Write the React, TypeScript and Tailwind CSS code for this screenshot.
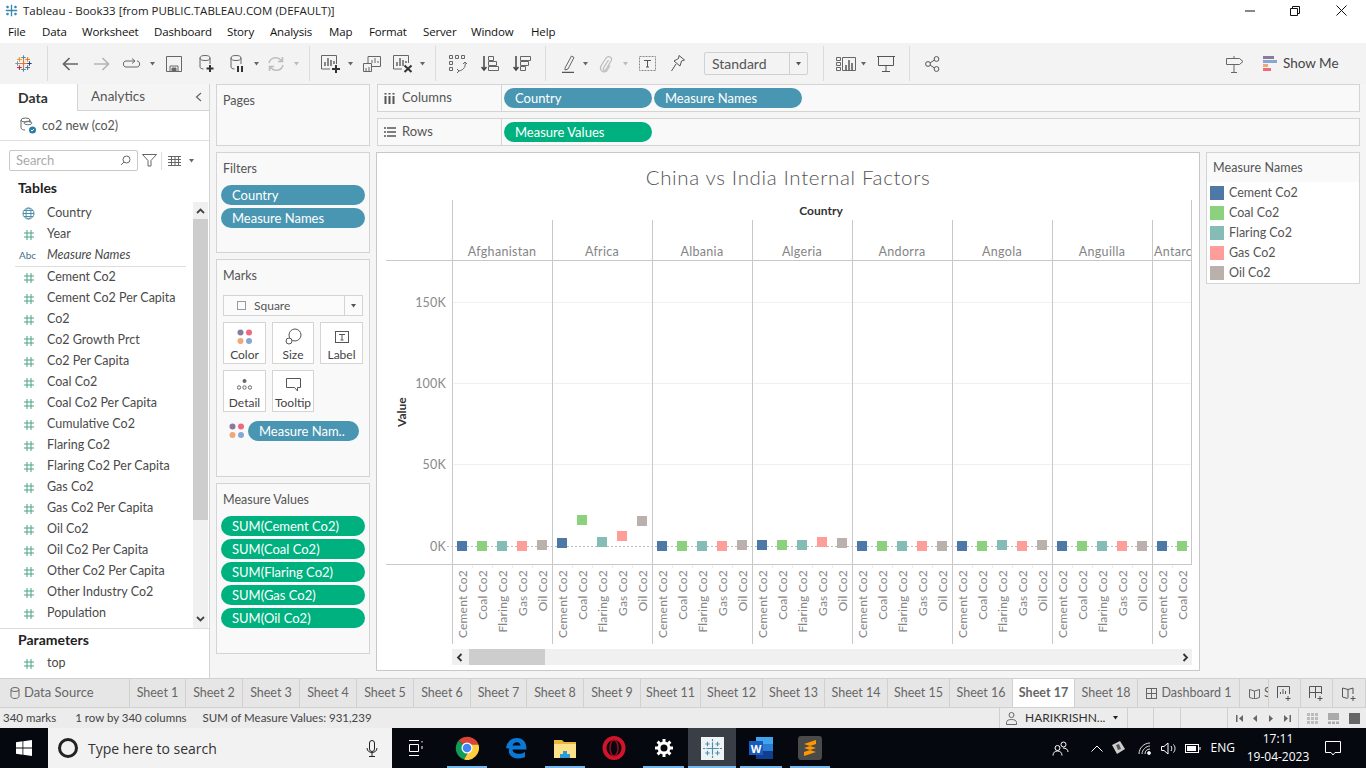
import React from "react";

const T = "font-['Lato','Liberation_Sans',sans-serif]";
const S = "font-['Open_Sans','Liberation_Sans',sans-serif]";

function Caret({ c = "", color = "#666" }: { c?: string; color?: string }) {
  return (
    <svg className={`${c} shrink-0`} width="5" height="4" viewBox="0 0 5 4">
      <path d="M0 0h5L2.5 3.5z" fill={color} />
    </svg>
  );
}
function Sep({ c }: { c: string }) {
  return <div className={`${c} w-px h-[35px] bg-[#dcdcdc] shrink-0`} />;
}
function Logo({ size = 17 }: { size?: number }) {
  const bars: [number, number, number, string, number][] = [
    [8.5, 8.5, 4, "#e8762b", 1.2],
    [8.5, 2.5, 2.2, "#5b879b", 1],
    [8.5, 14.5, 2.2, "#59879b", 1],
    [2.5, 8.5, 2.2, "#7099a6", 1],
    [14.5, 8.5, 2.2, "#1f457e", 1],
    [4.4, 4.4, 2.4, "#eb912b", 1],
    [12.6, 4.4, 2.4, "#e8762b", 1],
    [4.4, 12.6, 2.4, "#c72035", 1],
    [12.6, 12.6, 2.4, "#5b6591", 1],
  ];
  return (
    <svg className="shrink-0" width={size} height={size} viewBox="0 0 17 17">
      {bars.map(([x, y, r, col, w], i) => (
        <path key={i} d={`M${x - r} ${y}h${r * 2}M${x} ${y - r}v${r * 2}`} stroke={col} strokeWidth={w} fill="none" />
      ))}
    </svg>
  );
}
function Pill({ label, green, c = "w-[144px]" }: { label: string; green?: boolean; c?: string }) {
  return (
    <div className={`${c} ${green ? "bg-[#00b180]" : "bg-[#4996b2]"} h-5 rounded-[10px] flex items-center pl-[11px] text-white text-[13px] leading-none shrink-0 whitespace-nowrap`}>
      {label}
    </div>
  );
}
function Hash() {
  return (
    <svg width="10" height="10" viewBox="0 0 10 10" className="shrink-0">
      <path d="M3 0v10M7 0v10M0 3h10M0 7h10" stroke="#4ba383" strokeWidth="1" fill="none" />
    </svg>
  );
}
function Dots() {
  return (
    <svg width="16" height="16" viewBox="0 0 16 16" className="shrink-0">
      <circle cx="3.5" cy="3.5" r="3" fill="#8a7a9c" />
      <circle cx="12" cy="3.5" r="3" fill="#f0687c" />
      <circle cx="3.5" cy="12" r="3" fill="#f0a878" />
      <circle cx="12" cy="12" r="3" fill="#86a8d0" />
    </svg>
  );
}

const fields = ["Cement Co2", "Cement Co2 Per Capita", "Co2", "Co2 Growth Prct", "Co2 Per Capita", "Coal Co2", "Coal Co2 Per Capita", "Cumulative Co2", "Flaring Co2", "Flaring Co2 Per Capita", "Gas Co2", "Gas Co2 Per Capita", "Oil Co2", "Oil Co2 Per Capita", "Other Co2 Per Capita", "Other Industry Co2", "Population"];

function Row({ icon, label, italic }: { icon: React.ReactNode; label: string; italic?: boolean }) {
  return (
    <div className="h-[21px] flex items-center">
      <div className="w-[47px] pl-[15px] flex justify-center items-center pr-[5px]">{icon}</div>
      <span className={`text-[12.5px] text-[#4a4a4a] whitespace-nowrap ${italic ? "italic" : ""}`}>{label}</span>
    </div>
  );
}

function LeftPanel() {
  return (
    <div className="w-[210px] shrink-0 bg-white border-r border-[#d4d4d4] flex flex-col h-full">
      <div className="h-[27px] flex text-[14px] shrink-0">
        <div className="w-[77px] flex items-center pl-[18px] pb-[1px] font-bold text-[#333]">Data</div>
        <div className="flex-1 flex items-center pl-[13px] pb-[1px] bg-[#f5f5f5] border-l border-b border-[#d4d4d4] text-[13.5px] text-[#555] relative">
          Analytics
          <svg className="ml-auto mr-[7px]" width="7" height="10" viewBox="0 0 7 10"><path d="M6 1L1.500 5 6 9" stroke="#666" fill="none" strokeWidth="1.200" /></svg>
        </div>
      </div>
      <div className="h-[30px] flex items-center border-b border-[#e0e0e0] shrink-0">
        <svg className="ml-[20px]" width="16" height="17" viewBox="0 0 16 17" fill="none">
          <ellipse cx="5.500" cy="3" rx="4.500" ry="2" stroke="#666" />
          <path d="M1 3v8c0 1 2 2 4 2M10 3v3" stroke="#666" />
          <ellipse cx="8" cy="6" rx="4" ry="1.800" stroke="#777" />
          <circle cx="12.500" cy="13" r="3.500" fill="#2d7ea4" />
          <path d="M11 13l1 1 2-2" stroke="#fff" />
        </svg>
        <span className="ml-[6px] pt-[2px] text-[12.5px] text-[#555]">co2 new (co2)</span>
      </div>
      <div className="h-[21px] mt-[9px] flex items-center shrink-0">
        <div className="ml-[9px] w-[129px] h-[21px] border border-[#c8c8c8] rounded-[2px] flex items-center pl-[6px] text-[13px] text-[#aaa]">
          Search
          <svg className="ml-auto mr-[6px]" width="11" height="11" viewBox="0 0 11 11" fill="none"><circle cx="6.500" cy="4.500" r="3.500" stroke="#666" /><path d="M4 7L1 10" stroke="#666" /></svg>
        </div>
        <svg className="ml-[4px]" width="15" height="13" viewBox="0 0 15 13" fill="none"><path d="M.5.500h14L9 6.500V12H6V6.500z" stroke="#666" /></svg>
        <div className="ml-[4px] w-px h-[18px] bg-[#ddd]" />
        <svg className="ml-[6px]" width="13" height="10" viewBox="0 0 13 10" fill="none"><path d="M0 .500h13M0 3.500h13M0 6.500h13M0 9.500h13M3.500 0v10M7 0v10M10.500 0v10" stroke="#666" /></svg>
        <Caret c="ml-[8px]" />
      </div>
      <div className="h-[31px] pl-[18px] pt-[8px] text-[14px] font-bold text-[#222] leading-[18px] shrink-0">Tables</div>
      <div className="h-[426px] flex shrink-0 overflow-hidden">
        <div className="w-[193px] shrink-0 pt-[1px]">
          <Row label="Country" icon={
            <svg width="13" height="13" viewBox="0 0 13 13" fill="none" stroke="#4a8eaa"><circle cx="6.500" cy="6.500" r="5.500" /><ellipse cx="6.500" cy="6.500" rx="2.500" ry="5.500" /><path d="M1 6.500h11M2 3.500h9M2 9.500h9" /></svg>
          } />
          <Row label="Year" icon={<Hash />} />
          <Row label="Measure Names" italic icon={<span className="text-[10px] text-[#3f6f8e] -ml-[2px]">Abc</span>} />
          <div className="h-px bg-[#ddd] ml-[15px] mr-[7px]" />
          {fields.map((f) => <Row key={f} label={f} icon={<Hash />} />)}
        </div>
        <div className="w-[15px] flex flex-col bg-[#f0f0f0] shrink-0">
          <div className="h-[17px] flex items-center justify-center">
            <svg width="9" height="6" viewBox="0 0 9 6"><path d="M1 5l3.500-3.500L8 5" stroke="#444" strokeWidth="1.800" fill="none" /></svg>
          </div>
          <div className="h-[301px] bg-[#cdcdcd]" />
          <div className="flex-1 flex items-end justify-center pb-[6px]">
            <svg width="9" height="6" viewBox="0 0 9 6"><path d="M1 1l3.500 3.500L8 1" stroke="#444" strokeWidth="1.800" fill="none" /></svg>
          </div>
        </div>
      </div>
      <div className="border-t border-[#dcdcdc] pl-[18px] h-[22px] text-[14px] font-bold text-[#222] flex items-center shrink-0">Parameters</div>
      <div className="mt-[3px]"><Row label="top" icon={<Hash />} /></div>
    </div>
  );
}

function Card({ title, c, children }: { title: string; c: string; children?: React.ReactNode }) {
  return (
    <div className={`${c} bg-[#f9f9f9] border border-[#d4d4d4] shrink-0 px-[4px]`}>
      <div className="h-[30px] flex items-center pl-[2px] pt-[3px] text-[12.5px] text-[#555]">{title}</div>
      {children}
    </div>
  );
}
function MarkBtn({ label, icon, c = "w-[43px]" }: { label: string; icon: React.ReactNode; c?: string }) {
  return (
    <div className={`${c} h-[42px] border border-[#d4d4d4] bg-white flex flex-col items-center pt-[5px] shrink-0`}>
      <div className="h-[17px] flex items-center">{icon}</div>
      <span className="text-[12px] text-[#444] leading-[16px] mt-[2px]">{label}</span>
    </div>
  );
}
function ShelfColumn() {
  return (
    <div className="w-[166px] shrink-0 flex flex-col gap-[6px] pl-[6px]">
      <Card title="Pages" c="w-[154px] h-[62px]" />
      <Card title="Filters" c="w-[154px] h-[101px]">
        <div className="flex flex-col gap-[3px] mt-[2px]">
          <Pill label="Country" />
          <Pill label="Measure Names" />
        </div>
      </Card>
      <Card title="Marks" c="w-[154px] h-[218px]">
        <div className="ml-[2px] mt-[5px] w-[140px] h-[21px] border border-[#d4d4d4] bg-[#fbfbfb] flex items-center text-[12px] text-[#555]">
          <div className="w-[9px] h-[9px] border border-[#999] ml-[13px] mr-[8px]" />
          Square
          <div className="ml-auto w-[18px] h-full border-l border-[#d4d4d4] flex items-center justify-center"><Caret color="#555" /></div>
        </div>
        <div className="ml-[2px] mt-[6px] flex gap-[6px]">
          <MarkBtn label="Color" icon={<Dots />} />
          <MarkBtn label="Size" c="w-[42px]" icon={
            <svg width="17" height="17" viewBox="0 0 17 17" fill="none" stroke="#555"><circle cx="10" cy="7" r="6" /><circle cx="4" cy="13" r="3" fill="#fff" /></svg>
          } />
          <MarkBtn label="Label" icon={
            <svg width="14" height="12" viewBox="0 0 14 12" fill="none"><rect x=".5" y=".5" width="13" height="11" stroke="#555" /><path d="M4 3.500h6M7 3.500v5.500M5.500 9h3" stroke="#555" /></svg>
          } />
        </div>
        <div className="ml-[2px] mt-[6px] flex gap-[6px]">
          <MarkBtn label="Detail" icon={
            <svg width="15" height="11" viewBox="0 0 15 11" fill="none"><circle cx="7.500" cy="2" r="2" fill="#666" /><circle cx="2" cy="8.500" r="1.700" stroke="#666" /><circle cx="7.500" cy="8.500" r="1.700" stroke="#666" /><circle cx="13" cy="8.500" r="1.700" stroke="#666" /></svg>
          } />
          <MarkBtn label="Tooltip" c="w-[42px]" icon={
            <svg width="15" height="14" viewBox="0 0 15 14" fill="none"><path d="M.5.500h14v9h-3v3.500l-3-3.500H.5z" stroke="#555" /></svg>
          } />
        </div>
        <div className="flex items-center mt-[9px] ml-[8px] gap-[3px]">
          <div className="w-[16px]"><Dots /></div>
          <Pill label="Measure Nam.." c="w-[111px]" />
        </div>
      </Card>
      <Card title="Measure Values" c="w-[154px] h-[171px]">
        <div className="flex flex-col gap-[3px] mt-[2px]">
          {["SUM(Cement Co2)", "SUM(Coal Co2)", "SUM(Flaring Co2)", "SUM(Gas Co2)", "SUM(Oil Co2)"].map((p) => <Pill key={p} label={p} green />)}
        </div>
      </Card>
    </div>
  );
}

const colors = ["#4e79a7", "#8cd17d", "#86bcb6", "#ff9d9a", "#bab0ac"];
const measures = ["Cement Co2", "Coal Co2", "Flaring Co2", "Gas Co2", "Oil Co2"];
const panes = [
  { n: "Afghanistan", y: [546, 546, 546, 546, 545] },
  { n: "Africa", y: [543, 520, 542, 536, 521] },
  { n: "Albania", y: [546, 546, 546, 546, 545] },
  { n: "Algeria", y: [545, 545, 545, 542, 543] },
  { n: "Andorra", y: [546, 546, 546, 546, 546] },
  { n: "Angola", y: [546, 546, 545, 546, 545] },
  { n: "Anguilla", y: [546, 546, 546, 546, 546] },
  { n: "Antarctica", y: [546, 546, 546, 546, 546] },
];
const FF = "Lato, 'Liberation Sans', sans-serif";

function Chart() {
  return (
    <svg width="822" height="492" viewBox="377 153 822 492" className="block shrink-0" fontFamily={FF}>
      <defs>
        <clipPath id="plot"><rect x="377" y="153" width="814" height="492" /></clipPath>
      </defs>
      <text x="788" y="185" textAnchor="middle" fontSize="20.500" fontWeight="300" letterSpacing=".65" fill="#555">China vs India Internal Factors</text>
      <text x="821" y="215" textAnchor="middle" fontSize="12" fontWeight="700" fill="#333">Country</text>
      {[302, 383, 464].map((y) => <path key={y} d={`M452 ${y}.5H1191`} stroke="#f0f0f0" />)}
      {[["150K", 307], ["100K", 388], ["50K", 469], ["0K", 551]].map(([t, y]) => (
        <text key={t} x="446" y={y} textAnchor="end" fontSize="12.500" letterSpacing=".2" fill="#8a8a8a">{t}</text>
      ))}
      <text transform="translate(406 427) rotate(-90)" fontSize="12" fontWeight="700" fill="#333">Value</text>
      <path d="M447 546.500H1191" stroke="#bbb" strokeDasharray="2 2" />
      <path d="M386 260.500H1191M386 564.500H1191" stroke="#c8c8c8" />
      <path d="M452.500 200V644M1191.500 200V565" stroke="#c8c8c8" />
      {[552, 652, 752, 852, 952, 1052, 1152].map((x) => <path key={x} d={`M${x}.5 220V644`} stroke="#c8c8c8" />)}
      <g clipPath="url(#plot)">
        {panes.map((p, i) => (
          <g key={p.n}>
            <text x={i === 7 ? 1154 : 502 + i * 100} y="256" textAnchor={i === 7 ? "start" : "middle"} fontSize="12.500" letterSpacing=".3" fill="#858585">{p.n}</text>
            {p.y.map((y, k) => {
              const x = 462 + i * 100 + k * 20;
              return (
                <g key={k}>
                  <rect x={x - 5} y={y - 5} width="10" height="10" fill={colors[k]} />
                  {k > 0 && <path d={`M${x - 10}.5 565v3`} stroke="#eee" />}
                  <text transform={`translate(${x + 4.5} 570) rotate(-90)`} textAnchor="end" fontSize="12" letterSpacing=".2" fill="#858585">{measures[k]}</text>
                </g>
              );
            })}
          </g>
        ))}
      </g>
    </svg>
  );
}

function Main() {
  return (
    <div className="flex-1 min-w-0 flex flex-col pt-0 pr-[6px]">
      <div className="h-[28px] bg-[#f9f9f9] border border-[#d4d4d4] flex items-center mt-[0px] ml-[1px] shrink-0">
        <div className="w-[124px] h-full flex items-center border-r border-[#d4d4d4] text-[13px] text-[#555] pl-[6px]">
          <svg width="11" height="11" viewBox="0 0 11 11" className="mr-[7px]"><path d="M1.500 0v1.500M1.500 3v8M5.500 0v1.500M5.500 3v8M9.500 0v1.500M9.500 3v8" stroke="#555" strokeWidth="2" fill="none" /></svg>
          Columns
        </div>
        <div className="flex gap-[2px] ml-[2px]">
          <Pill label="Country" c="w-[148px]" />
          <Pill label="Measure Names" c="w-[148px]" />
        </div>
      </div>
      <div className="h-[28px] mt-[6px] bg-[#f9f9f9] border border-[#d4d4d4] flex items-center ml-[1px] shrink-0">
        <div className="w-[124px] h-full flex items-center border-r border-[#d4d4d4] text-[13px] text-[#555] pl-[6px]">
          <svg width="12" height="10" viewBox="0 0 12 10" className="mr-[6px]"><path d="M0 1h2M3 1h9M0 5h2M3 5h9M0 9h2M3 9h9" stroke="#555" strokeWidth="1.500" fill="none" /></svg>
          Rows
        </div>
        <div className="ml-[2px]"><Pill label="Measure Values" green c="w-[148px]" /></div>
      </div>
      <div className="flex mt-[6px] gap-[6px] items-start">
        <div className="w-[824px] h-[519px] bg-white border border-[#c8c8c8] flex flex-col shrink-0">
          <Chart />
          <div className="h-[16px] mt-[4px] ml-[75px] w-[740px] bg-[#f0f0f0] flex items-center relative">
            <svg className="ml-[4px]" width="7" height="9" viewBox="0 0 7 9"><path d="M5.500 1L2 4.500 5.500 8" stroke="#333" strokeWidth="1.800" fill="none" /></svg>
            <div className="w-[76px] h-full bg-[#cdcdcd] ml-[6px]" />
            <svg className="ml-auto mr-[3px]" width="7" height="9" viewBox="0 0 7 9"><path d="M1.500 1L5 4.500 1.500 8" stroke="#333" strokeWidth="1.800" fill="none" /></svg>
          </div>
        </div>
        <div className="w-[154px] h-[132px] border border-[#d4d4d4] bg-white shrink-0">
          <div className="h-[29px] bg-[#f9f9f9] flex items-center pl-[6px] pt-[2px] text-[12.5px] tracking-[.1px] text-[#555]">Measure Names</div>
          <div className="pt-[1px]">
            {measures.map((m, i) => (
              <div key={m} className="h-5 flex items-center pl-[3px] text-[12.5px] text-[#555]">
                <div className={`w-[14px] h-[14px] mr-[5px] ${["bg-[#4e79a7]", "bg-[#8cd17d]", "bg-[#86bcb6]", "bg-[#ff9d9a]", "bg-[#bab0ac]"][i]}`} />
                {m}
              </div>
            ))}
          </div>
        </div>
      </div>
    </div>
  );
}

const tabs: [string, string][] = [
  ["Sheet 1", "w-[56px]"], ["Sheet 2", "w-[57px]"], ["Sheet 3", "w-[57px]"], ["Sheet 4", "w-[57px]"], ["Sheet 5", "w-[57px]"], ["Sheet 6", "w-[57px]"], ["Sheet 7", "w-[56px]"], ["Sheet 8", "w-[57px]"], ["Sheet 9", "w-[57px]"], ["Sheet 11", "w-[60px]"], ["Sheet 12", "w-[62px]"], ["Sheet 13", "w-[62px]"], ["Sheet 14", "w-[63px]"], ["Sheet 15", "w-[62px]"], ["Sheet 16", "w-[63px]"],
];

function Tabs() {
  const cell = "h-full flex items-center justify-center border-r border-[#d0d0d0] text-[12.5px] text-[#666] whitespace-nowrap shrink-0";
  return (
    <div className="h-[30px] shrink-0 bg-[#e6e6e6] border-t border-b border-[#d0d0d0] flex overflow-hidden">
      <div className="h-full flex items-center border-r border-[#d0d0d0] text-[13px] text-[#666] whitespace-nowrap shrink-0 w-[130px] pl-[10px]">
        <svg className="mr-[4px]" width="10" height="12" viewBox="0 0 10 12" fill="none"><ellipse cx="5" cy="2.500" rx="4" ry="2" stroke="#666" /><path d="M1 2.500v7c0 1 2 2 4 2s4-1 4-2v-7" stroke="#666" /></svg>
        Data Source
      </div>
      {tabs.map(([t, w]) => <div key={t} className={`${cell} ${w}`}>{t}</div>)}
      <div className={`${cell} w-[62px] bg-white font-bold text-[#555]`}>Sheet 17</div>
      <div className={`${cell} w-[63px]`}>Sheet 18</div>
      <div className={`${cell} w-[102px]`}>
        <svg className="mr-[5px]" width="11" height="11" viewBox="0 0 11 11" fill="none" stroke="#666"><rect x=".5" y=".5" width="10" height="10" /><path d="M5.500 0v11M0 5.500h11" /></svg>
        Dashboard 1
      </div>
      <div className="h-full flex items-center border-r border-[#d0d0d0] text-[12.5px] text-[#666] shrink-0 w-[29px] pl-[9px] overflow-hidden">
        <svg className="mr-[4px] shrink-0" width="11" height="11" viewBox="0 0 11 11" fill="none" stroke="#666"><path d="M.5 1.500L5.500 3l5-1.500v8L5.500 11 .5 9.500zM5.500 3v8" /></svg>
        S
      </div>
      {[
        <path key="a" d="M.5 12V.5h12V8M3.500 8V6M6 8V3M8.500 8V5M11 10v5M8.500 12.500h5" />,
        <path key="b" d="M.5 12V.5h12V8M6.500 0v12M0 6.500h12M11 10v5M8.500 12.500h5" />,
        <path key="c" d="M.5 2L6 3.500 11 2v6M.5 2v9l5 1.500M6 3.500V12M11 10v5M8.500 12.500h5" />,
      ].map((p, i) => (
        <div key={i} className={`h-full flex items-center justify-center shrink-0 border-r border-[#d0d0d0] ${i === 2 ? "w-[33px]" : "w-[32px]"}`}>
          <svg width="15" height="15" viewBox="0 0 15 15" fill="none" stroke="#555">{p}</svg>
        </div>
      ))}
    </div>
  );
}

function Status() {
  return (
    <div className="h-[20px] shrink-0 bg-[#ececec] flex items-center text-[11.5px] text-[#444] whitespace-nowrap">
      <span className="ml-[3px]">340 marks</span>
      <span className="ml-[19px]">1 row by 340 columns</span>
      <span className="ml-[16px]">SUM of Measure Values: 931,239</span>
      <div className="ml-auto w-[128px] h-full flex items-center border-l border-[#d0d0d0] pl-[6px]">
        <svg width="11" height="13" viewBox="0 0 11 13" fill="none" stroke="#666"><circle cx="5.500" cy="3" r="2.500" /><path d="M.5 12.500v-2c0-2 2-3 5-3s5 1 5 3v2z" /></svg>
        <span className="ml-[8px] text-[#333] text-[12px]">HARIKRISHN...</span>
        <Caret c="ml-[8px]" color="#222" />
      </div>
      <div className="w-[26px] h-full border-l border-[#d0d0d0]" />
      <div className="w-[27px] h-full border-l border-[#d0d0d0]" />
      <div className="w-[47px] h-full border-l border-[#d0d0d0]" />
      <div className="w-[71px] h-full border-l border-[#d0d0d0] flex items-center pl-[8px]">
        <svg width="55" height="7" viewBox="0 0 55 7" fill="#666"><path d="M0 0h1.500v7H0zM7 0v7L3 3.500zM21 0v7l-4-3.500zM33 0v7l4-3.500zM48 0v7l4-3.500zM53.500 0H55v7h-1.500z" /></svg>
      </div>
      <div className="w-[68px] h-full border-l border-[#d0d0d0] flex items-center pl-[8px] gap-[10px]">
        <svg width="11" height="11" viewBox="0 0 11 11" fill="#bbb" className="shrink-0"><path d="M0 0h3v3H0zM4 0h3v3H4zM8 0h3v3H8zM0 4h3v3H0zM4 4h3v3H4zM8 4h3v3H8zM0 8h3v3H0zM4 8h3v3H4zM8 8h3v3H8z" /></svg>
        <svg width="11" height="11" viewBox="0 0 11 11" fill="#aaa" className="shrink-0"><path d="M0 0h11v7H0zM0 8.500h3V11H0zM4 8.500h3V11H4zM8 8.500h3V11H8z" /></svg>
        <div className="w-[11px] h-[11px] bg-[#666] shrink-0" />
      </div>
    </div>
  );
}

function TaskIcon({ c, children, hi, bar = true }: { c: string; children: React.ReactNode; hi?: boolean; bar?: boolean }) {
  return (
    <div className={`${c} h-full flex items-center justify-center relative shrink-0 ${hi ? "bg-[#3a3f47]" : ""}`}>
      {children}
      {bar && <div className={`absolute bottom-0 h-[2px] bg-[#76b9ed] ${hi ? "left-0 right-0" : "left-[4px] right-[4px]"}`} />}
    </div>
  );
}

function Taskbar() {
  return (
    <div className={`h-[40px] shrink-0 bg-[#05080f] flex items-center text-white ${S}`}>
      <div className="w-[48px] h-full flex items-center justify-center">
        <svg width="16" height="16" viewBox="0 0 16 16" fill="#fff"><path d="M0 2.200l6.500-.9v6.200H0zM7.300 1.200L16 0v7.500H7.300zM0 8.500h6.500v6.200L0 13.800zM7.300 8.500H16V16l-8.700-1.200z" /></svg>
      </div>
      <div className="w-[344px] h-full bg-[#f2f2f2] flex items-center text-[#222]">
        <div className="ml-[10px] w-[20px] h-[20px] rounded-full border-[3px] border-[#222]" />
        <span className="ml-[10px] text-[14px] text-[#333]">Type here to search</span>
        <svg className="ml-auto mr-[14px]" width="12" height="17" viewBox="0 0 12 17" fill="none" stroke="#222"><rect x="3.500" y=".5" width="5" height="11" rx="2.500" /><path d="M1 8c0 6 10 6 10 0M6 13v3M3 16.500h6" /></svg>
      </div>
      <TaskIcon c="w-[51px]" bar={false}>
        <svg width="16" height="16" viewBox="0 0 16 16" fill="none" stroke="#fff" className="-ml-[3px]"><path d="M1 .5h10M1 15.500h10M1.500 4.500h9v7h-9zM14 1v1.500M14 6v3" /></svg>
      </TaskIcon>
      <TaskIcon c="w-[48px]">
        <svg width="24" height="24" viewBox="0 0 24 24">
          <path d="M12 12L3.600 4.500A12 12 0 0 1 23.500 8.500H12z" fill="#db4437" />
          <path d="M12 12L3.600 4.500A12 12 0 0 0 9 23.600L15 13z" fill="#0f9d58" />
          <path d="M12 8.500h11.500A12 12 0 0 1 9 23.600L15 13z" fill="#ffcd40" />
          <circle cx="12" cy="12" r="5.500" fill="#fff" />
          <circle cx="12" cy="12" r="4.300" fill="#4285f4" />
        </svg>
      </TaskIcon>
      <TaskIcon c="w-[50px]" bar={false}>
        <svg width="22" height="22" viewBox="0 0 22 22"><path d="M1 11C2 4 7 1 12 1c6 0 9.500 4 9.500 11.500H7.500c.5 5 8 5.500 12.500 2.500v5c-5 2.500-13 2-15.500-3C3 14 4 11 6 9c-.5 1-1 2-1 3zM7.500 8.500h8C15.500 4 8.500 4 7.500 8.500z" fill="#0a78d4" /></svg>
      </TaskIcon>
      <TaskIcon c="w-[48px]">
        <svg width="22" height="20" viewBox="0 0 22 20"><path d="M0 2h8l2 2h12v3H0z" fill="#e8b93e" /><path d="M0 6h22v14H0z" fill="#fde28a" /><path d="M6 16h3v-3h4v3h3v4H6z" fill="#2f9bd6" /></svg>
      </TaskIcon>
      <TaskIcon c="w-[50px]" bar={false}>
        <svg width="24" height="24" viewBox="0 0 24 24" fill="none"><ellipse cx="12" cy="12" rx="9.500" ry="10" stroke="#d3132a" strokeWidth="4" /><ellipse cx="12" cy="12" rx="4" ry="8" stroke="#9b0b1e" strokeWidth="1.500" /></svg>
      </TaskIcon>
      <TaskIcon c="w-[49px]">
        <svg width="18" height="18" viewBox="0 0 18 18" fill="none"><circle cx="9" cy="9" r="5" stroke="#fff" strokeWidth="3" /><path d="M9 0v3.500M9 14.500V18M0 9h3.500M14.500 9H18M2.600 2.600l2.500 2.500M12.900 12.900l2.500 2.500M2.600 15.400l2.500-2.500M12.900 5.100l2.500-2.500" stroke="#fff" strokeWidth="3" /></svg>
      </TaskIcon>
      <TaskIcon c="w-[48px]" hi>
        <div className="w-[23px] h-[23px] bg-[#eef3f5] flex items-center justify-center"><svg width="19" height="19" viewBox="0 0 17 17"><path d="M8.500 3v11M3 8.500h11M8.500 0v2M8.500 15v2M0 8.500h2M15 8.500h2M4 2.500v4M2 4.500h4M13 2.500v4M11 4.500h4M4 10.500v4M2 12.500h4M13 10.500v4M11 12.500h4" stroke="#4f8fad" strokeWidth="1" fill="none" /></svg></div>
      </TaskIcon>
      <TaskIcon c="w-[50px]">
        <div className="w-[24px] h-[22px] relative">
          <div className="absolute right-0 top-0 w-[17px] h-[7px] bg-[#41a5ee]" />
          <div className="absolute right-0 top-[7px] w-[17px] h-[7px] bg-[#2b7cd3]" />
          <div className="absolute right-0 top-[14px] w-[17px] h-[8px] bg-[#103f91]" />
          <div className="absolute left-0 top-[4px] w-[14px] h-[14px] bg-[#185abd] flex items-center justify-center text-white text-[11px] font-bold leading-none">W</div>
        </div>
      </TaskIcon>
      <TaskIcon c="w-[48px]">
        <div className="w-[24px] h-[24px] rounded-[3px] bg-[#4a4a4a] flex items-center justify-center">
          <svg width="14" height="16" viewBox="0 0 14 16" fill="#ff9800"><path d="M13 0v4L1 8V4zM1 8l12 4V8L1 4zM1 12l12-4v4L1 16z" /></svg>
        </div>
      </TaskIcon>
      <div className="ml-auto h-full flex items-center">
        <svg width="17" height="15" viewBox="0 0 17 15" fill="none" stroke="#fff"><circle cx="5.500" cy="7" r="2.500" /><path d="M1 14.500c0-3 2-4.500 4.500-4.500s4.500 1.500 4.500 4.500" /><circle cx="11.500" cy="3.500" r="2.500" /><path d="M11 7c3 0 5 1.500 5 4" /></svg>
        <svg className="ml-[22px]" width="12" height="7" viewBox="0 0 12 7" fill="none" stroke="#fff"><path d="M.5 6.500L6 1l5.500 5.500" /></svg>
        <svg className="ml-[8px]" width="14" height="14" viewBox="0 0 14 14"><path d="M1 4l8-4 5 8-8 5z" fill="#ccc" /><path d="M5 4l3-1 2 5-3 1z" fill="#555" /></svg>
        <svg className="ml-[13px]" width="13" height="13" viewBox="0 0 13 13" fill="none" stroke="#ddd"><path d="M1 12C1 6 6 1 12 1M4 12c0-4 4-8 8-8M7 12c0-3 2-5 5-5" /><circle cx="11" cy="11" r="1.500" fill="#fff" /></svg>
        <svg className="ml-[10px]" width="16" height="13" viewBox="0 0 16 13" fill="none" stroke="#fff"><path d="M.5 4.500h2.500L7 1v11L3 8.500H.5zM10 4c1 1.500 1 3.500 0 5M12.500 2.500c2 2.500 2 5.500 0 8" /></svg>
        <svg className="ml-[8px]" width="16" height="9" viewBox="0 0 16 9" fill="none"><rect x=".5" y=".5" width="13" height="8" stroke="#fff" /><rect x="2" y="2" width="9" height="5" fill="#fff" /><path d="M15 3v3" stroke="#fff" /></svg>
        <span className="ml-[10px] text-[12px]">ENG</span>
        <div className="ml-[10px] w-[66px] flex flex-col items-center text-[12px] leading-[18px] whitespace-nowrap">
          <span>17:11</span>
          <span>19-04-2023</span>
        </div>
        <svg className="ml-[14px] mr-[25px]" width="16" height="15" viewBox="0 0 16 15" fill="none" stroke="#fff"><path d="M.5.5h15v11H10L8 14l-2-2.500H.5z" /></svg>
      </div>
    </div>
  );
}

export default function App() {
  return (
    <div className={`w-[1366px] h-[768px] overflow-hidden flex flex-col bg-[#f5f5f5] ${T}`}>
      <div className={`h-[21px] shrink-0 bg-white flex items-center text-[11.5px] text-[#222] ${S}`}>
        <div className="ml-[3px] w-[16px] h-[16px] flex items-center justify-center">
          <svg width="15" height="15" viewBox="0 0 17 17"><path d="M8.500 2v13M2 8.500h13M4 3v3M2.500 4.500h3M13 3v3M11.500 4.500h3M4 11v3M2.500 12.500h3M13 11v3M11.500 12.500h3" stroke="#3a88ab" strokeWidth="1.500" fill="none" /></svg>
        </div>
        <span className="ml-[4px]">Tableau - Book33 [from PUBLIC.TABLEAU.COM (DEFAULT)]</span>
        <svg className="ml-auto" width="10" height="2" viewBox="0 0 10 2"><path d="M0 1h10" stroke="#111" /></svg>
        <svg className="ml-[35px]" width="10" height="10" viewBox="0 0 10 10" fill="none" stroke="#111"><path d="M.5 2.500h7v7h-7zM2.500 2.500v-2h7v7h-2" /></svg>
        <svg className="ml-[36px] mr-[19px]" width="11" height="11" viewBox="0 0 11 11"><path d="M.5.5l10 10M10.500.5l-10 10" stroke="#111" /></svg>
      </div>
      <div className={`h-[22px] shrink-0 bg-white flex items-center text-[11.5px] tracking-[-0.15px] text-[#111] ${S}`}>
        <span className="ml-[8px] w-[18px]">File</span>
        <span className="ml-[16px] w-[24px]">Data</span>
        <span className="ml-[16px] w-[56px]">Worksheet</span>
        <span className="ml-[16px] w-[57px]">Dashboard</span>
        <span className="ml-[16px] w-[27px]">Story</span>
        <span className="ml-[16px] w-[43px]">Analysis</span>
        <span className="ml-[16px] w-[24px]">Map</span>
        <span className="ml-[16px] w-[38px]">Format</span>
        <span className="ml-[16px] w-[32px]">Server</span>
        <span className="ml-[16px] w-[44px]">Window</span>
        <span className="ml-[16px] w-[25px]">Help</span>
      </div>
      <div className="h-[41px] shrink-0 bg-[#f3f3f3] flex items-center">
        <div className="ml-[15px]"><Logo /></div>
        <Sep c="ml-[15px]" />
        <svg className="ml-[14px] shrink-0" width="16" height="14" viewBox="0 0 16 14" fill="none" stroke="#666" strokeWidth="1.700"><path d="M16 7H1.500M7.500 1l-6 6 6 6" /></svg>
        <svg className="ml-[16px] shrink-0" width="16" height="14" viewBox="0 0 16 14" fill="none" stroke="#b5b5b5" strokeWidth="1.700"><path d="M0 7h14.500M8.500 1l6 6-6 6" /></svg>
        <svg className="ml-[13px] shrink-0" width="18" height="11" viewBox="0 0 18 11" fill="none" stroke="#666"><path d="M12 3H3C-.5 3-.5 9 3 9h11c3.500 0 3.500-6 0-6" /><path d="M9 .5l3 2.500-3 2.500" /></svg>
        <Caret c="ml-[9px]" />
        <svg className="ml-[11px] shrink-0" width="16" height="16" viewBox="0 0 16 16" fill="none" stroke="#666"><path d="M.5.5h15v15H.5z" /><path d="M4 15.500V10h8v5.500" /><path d="M6 12h4v3H6z" fill="#666" /></svg>
        <svg className="ml-[17px] shrink-0" width="15" height="18" viewBox="0 0 15 18" fill="none"><ellipse cx="6" cy="3" rx="5" ry="2.500" stroke="#666" /><path d="M1 3v9c0 1 1.500 2 3.500 2M11 3v6" stroke="#666" /><path d="M11 10v7M7.500 13.500h7" stroke="#333" strokeWidth="2" /></svg>
        <svg className="ml-[16px] shrink-0" width="14" height="18" viewBox="0 0 14 18" fill="none"><ellipse cx="6" cy="3" rx="5" ry="2.500" stroke="#666" /><path d="M1 3v9c0 1 1.500 2 3.500 2M11 3v6" stroke="#666" /><path d="M8 11v6M12 11v6" stroke="#333" strokeWidth="2" /></svg>
        <Caret c="ml-[10px]" />
        <svg className="ml-[8px] shrink-0" width="18" height="18" viewBox="0 0 18 18" fill="none" stroke="#bbb" strokeWidth="1.500"><path d="M2 8a7 7 0 0 1 12-3l1.500 1.500M16 10a7 7 0 0 1-12 3l-1.500-1.500M15.500 2v4.500H11M2.500 16v-4.500H7" /></svg>
        <Caret c="ml-[9px]" color="#bbb" />
        <Sep c="ml-[10px]" />
        <svg className="ml-[11px] shrink-0" width="20" height="18" viewBox="0 0 20 18" fill="none"><path d="M9 14H.5V.5h15V9" stroke="#666" /><path d="M4 11V7M7 11V3M10 11V5M13 9V6" stroke="#666" strokeWidth="1.500" /><path d="M15 10v8M11 14h8" stroke="#333" strokeWidth="2" /></svg>
        <Caret c="ml-[7px]" />
        <svg className="ml-[10px] shrink-0" width="18" height="16" viewBox="0 0 18 16" fill="none" stroke="#666"><path d="M5 9V.5h12.500v10H9" /><path d="M9 7V4M12 7V2M15 7V5" /><path d="M.5 7.500h8v8h-8z" fill="#f3f3f3" /><path d="M3 15v-3M6 15v-4" /></svg>
        <svg className="ml-[12px] shrink-0" width="20" height="18" viewBox="0 0 20 18" fill="none"><path d="M9 14H.5V.5h15V8" stroke="#666" /><path d="M4 11V7M7 11V3M10 11V5M13 8V6" stroke="#666" strokeWidth="1.500" /><path d="M11.500 10.500l7 6.500M18.500 10.500l-7 6.500" stroke="#333" strokeWidth="2" /></svg>
        <Caret c="ml-[7px]" />
        <Sep c="ml-[10px]" />
        <svg className="ml-[13px] shrink-0" width="18" height="18" viewBox="0 0 18 18" fill="none" stroke="#666"><path d="M.5.5h3v3h-3zM6.500.5h3v3h-3zM12.500.5h3v3h-3zM.5 6.500h3v3h-3zM.5 12.500h3v3h-3z" /><path d="M16 7c1 4-1 8-6 9M8 14l2 2-2 2M14 9l2-2 2 2" /></svg>
        <svg className="ml-[14px] shrink-0" width="18" height="16" viewBox="0 0 18 16" fill="none"><path d="M3 0v14M.5 11L3 14l2.500-3" stroke="#444" strokeWidth="1.500" /><path d="M7.500.5h5v4h-5zM7.500 5.500h8v4h-8zM7.500 10.500h10v4h-10z" stroke="#666" /></svg>
        <svg className="ml-[14px] shrink-0" width="18" height="16" viewBox="0 0 18 16" fill="none"><path d="M3 0v14M.5 11L3 14l2.500-3" stroke="#444" strokeWidth="1.500" /><path d="M7.500.5h10v4h-10zM7.500 5.500h8v4h-8zM7.500 10.500h5v4h-5z" stroke="#666" /></svg>
        <Sep c="ml-[14px]" />
        <svg className="ml-[16px] shrink-0" width="13" height="18" viewBox="0 0 13 18" fill="none"><path d="M3 13L9.500 1 12 2.500 6 14 3 15z" stroke="#666" /><path d="M0 17.500h12" stroke="#555" strokeWidth="1.500" /></svg>
        <Caret c="ml-[8px]" />
        <svg className="ml-[11px] shrink-0" width="14" height="18" viewBox="0 0 14 18" fill="none" stroke="#bbb" strokeWidth="1.200"><path d="M9.500 5L4.500 13c-1 2 1.500 3 2.500 1.500L12 6c2-3.500-2.500-6-5-3L2 11c-2 4 2.500 8 6 4.500l3-5" /></svg>
        <Caret c="ml-[10px]" color="#bbb" />
        <svg className="ml-[11px] shrink-0" width="17" height="15" viewBox="0 0 17 15" fill="none"><rect x=".5" y=".5" width="16" height="14" stroke="#888" strokeDasharray="2 1" /><path d="M5 4.500h7M8.500 4.500v6.500M7 11h3" stroke="#555" /></svg>
        <svg className="ml-[15px] shrink-0" width="14" height="17" viewBox="0 0 14 17" fill="none" stroke="#555"><path d="M8 .5L13.500 5l-3 1-1.500 5-6-5 4.500-2.500zM5 9l-4.500 7" /></svg>
        <div className="ml-[19px] w-[104px] h-[23px] border border-[#d0d0d0] rounded-[2px] flex items-center pl-[7px] text-[14px] text-[#555] shrink-0">
          Standard
          <div className="ml-auto w-[18px] h-full border-l border-[#d0d0d0] flex items-center justify-center"><Caret color="#555" /></div>
        </div>
        <Sep c="ml-[15px]" />
        <svg className="ml-[12px] shrink-0" width="20" height="14" viewBox="0 0 20 14" fill="none"><path d="M.5.5h4v3h-4zM.5 5.500h4v3h-4zM.5 10.500h4v3h-4zM6.500.5h13v13h-13z" stroke="#666" /><path d="M10 13V8M13 13V3M16 13V6" stroke="#555" strokeWidth="1.500" /></svg>
        <Caret c="ml-[5px]" />
        <svg className="ml-[11px] shrink-0" width="18" height="16" viewBox="0 0 18 16" fill="none" stroke="#555"><path d="M0 .5h18M1.500.5v9h15v-9M9 9.500V15M5 15.500h8" /></svg>
        <Sep c="ml-[14px]" />
        <svg className="ml-[15px] shrink-0" width="15" height="16" viewBox="0 0 15 16" fill="none" stroke="#555"><circle cx="3" cy="8" r="2.400" /><circle cx="11.500" cy="3" r="2.400" /><circle cx="11.500" cy="13" r="2.400" /><path d="M5 7l4.500-3M5 9l4.500 3" /></svg>
        <svg className="ml-auto shrink-0" width="18" height="18" viewBox="0 0 18 18" fill="none" stroke="#666"><path d="M.5 3.500h13l3.500 3-3.500 3H.5zM8 1v2.500M8 9.500V17M5 17.500h6" /></svg>
        <svg className="ml-[19px] shrink-0" width="14" height="16" viewBox="0 0 14 16"><rect width="11" height="3" fill="#8a7a9c" /><rect y="4" width="14" height="3" fill="#86a8d0" /><rect y="8" width="5" height="3" fill="#f0a878" /><rect y="12" width="8" height="3" fill="#f0687c" /></svg>
        <span className="ml-[6px] w-[54px] mr-[29px] text-[13.5px] text-[#444] whitespace-nowrap">Show Me</span>
      </div>
      <div className="h-[594px] shrink-0 flex overflow-hidden">
        <LeftPanel />
        <ShelfColumn />
        <Main />
      </div>
      <Tabs />
      <Status />
      <Taskbar />
    </div>
  );
}
